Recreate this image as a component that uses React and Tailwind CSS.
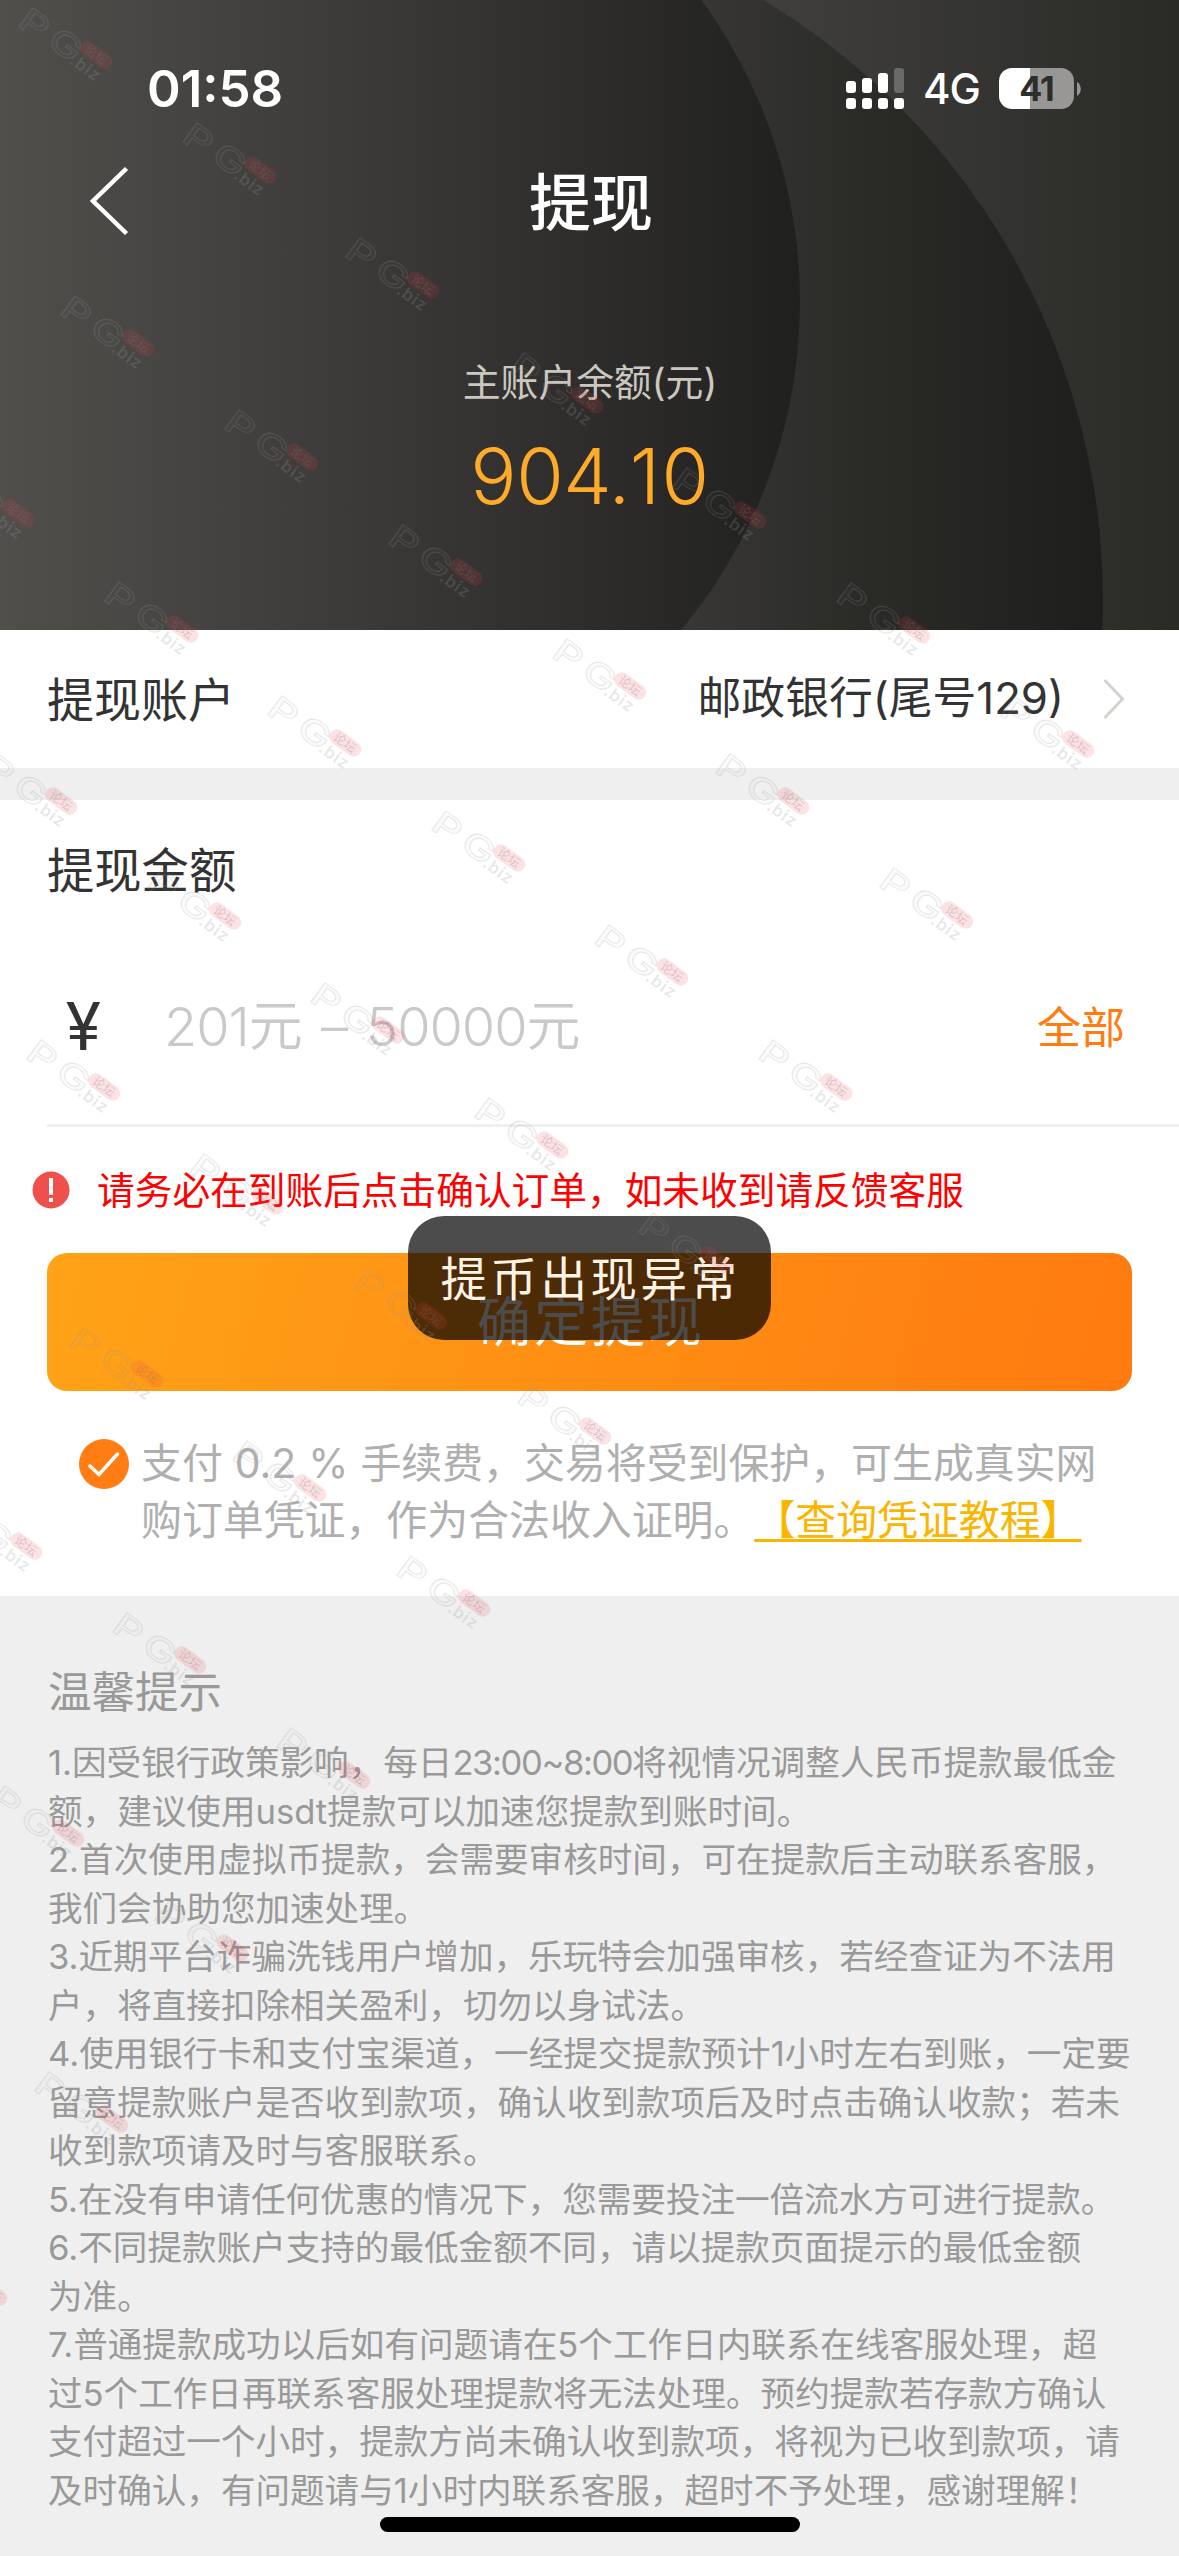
import React from 'react';

const MARKS = [
    [19, 5], [183, 120], [346, 235], [510, 350], [673, 465], [837, 580], [1001, 694],
    [61, 293], [225, 407], [389, 522], [553, 636], [716, 751], [880, 865],
    [-59, 463], [105, 579], [268, 693], [432, 808], [595, 922], [759, 1037],
    [-16, 751], [148, 866], [311, 980], [475, 1095], [639, 1210],
    [27, 1037], [190, 1151], [354, 1266], [518, 1381],
    [70, 1324], [233, 1438], [397, 1553],
    [-51, 1496], [113, 1610], [277, 1725],
    [-9, 1783], [155, 1898],
    [35, 2069], [-86, 2242],
];

const TIPS = [
    '1.因受银行政策影响，每日23:00~8:00将视情况调整人民币提款最低金',
    '额，建议使用usdt提款可以加速您提款到账时间。',
    '2.首次使用虚拟币提款，会需要审核时间，可在提款后主动联系客服，',
    '我们会协助您加速处理。',
    '3.近期平台诈骗洗钱用户增加，乐玩特会加强审核，若经查证为不法用',
    '户，将直接扣除相关盈利，切勿以身试法。',
    '4.使用银行卡和支付宝渠道，一经提交提款预计1小时左右到账，一定要',
    '留意提款账户是否收到款项，确认收到款项后及时点击确认收款；若未',
    '收到款项请及时与客服联系。',
    '5.在没有申请任何优惠的情况下，您需要投注一倍流水方可进行提款。',
    '6.不同提款账户支持的最低金额不同，请以提款页面提示的最低金额',
    '为准。',
    '7.普通提款成功以后如有问题请在5个工作日内联系在线客服处理，超',
    '过5个工作日再联系客服处理提款将无法处理。预约提款若存款方确认',
    '支付超过一个小时，提款方尚未确认收到款项，将视为已收到款项，请',
    '及时确认，有问题请与1小时内联系客服，超时不予处理，感谢理解！',
];

const HeaderBackground = () => (
    <svg className="absolute inset-0" width="1179" height="630" viewBox="0 0 1179 630">
        <defs>
            <linearGradient id="outer" gradientUnits="userSpaceOnUse" x1="763" y1="0" x2="1179" y2="0">
                <stop offset="0" stopColor="#403f3d" />
                <stop offset="1" stopColor="#2a2a27" />
            </linearGradient>
            <linearGradient id="middle" gradientUnits="userSpaceOnUse" x1="683" y1="0" x2="1103" y2="0">
                <stop offset="0" stopColor="#383735" />
                <stop offset="0.45" stopColor="#2a2a27" />
                <stop offset="1" stopColor="#1e1e1c" />
            </linearGradient>
            <linearGradient id="inner" gradientUnits="userSpaceOnUse" x1="0" y1="0" x2="800" y2="0">
                <stop offset="0" stopColor="#504f4c" />
                <stop offset="0.45" stopColor="#3b3a38" />
                <stop offset="0.75" stopColor="#2d2c2a" />
                <stop offset="1" stopColor="#20201e" />
            </linearGradient>
        </defs>
        <rect width="1179" height="630" fill="url(#outer)" />
        <circle cx="403" cy="600" r="700" fill="url(#middle)" />
        <circle cx="288" cy="302" r="512" fill="url(#inner)" />
    </svg>
);

const StatusBar = () => (
    <div className="flex h-[148px] items-start justify-between pl-[147px] pr-[98px] pt-[60px] text-white">
        <span className="text-[51px] font-semibold leading-[57px]">01:58</span>
        <div className="flex items-center pt-[7px]">
            <svg width="58" height="41" viewBox="0 0 58 41" fill="#fff">
                <rect x="0" y="13" width="10" height="12" rx="3" />
                <rect x="16" y="10" width="10" height="15" rx="3" />
                <rect x="32" y="5" width="10" height="20" rx="3" />
                <rect x="48" y="0" width="10" height="25" rx="3" opacity="0.25" />
                <rect x="0" y="30" width="10" height="11" rx="3" />
                <rect x="16" y="30" width="10" height="11" rx="3" />
                <rect x="32" y="30" width="10" height="11" rx="3" />
                <rect x="48" y="30" width="10" height="11" rx="3" />
            </svg>
            <span className="ml-[19px] w-[76px] text-[42px] font-medium leading-[43px] tracking-[-1px]">4G</span>
            <div className="flex h-[41px] w-[75px] items-center justify-center rounded-[13px] bg-linear-to-r from-white from-[41%] to-[#989795] to-[41%]">
                <span className="text-[34px] font-bold leading-[41px] tracking-[-1px] text-[#2d2d2b]">41</span>
            </div>
            <svg className="ml-[3px]" width="4" height="14" viewBox="0 0 4 14">
                <path d="M0 0C5 3 5 11 0 14Z" fill="#989795" />
            </svg>
        </div>
    </div>
);

const Header = () => (
    <header className="relative h-[630px]">
        <HeaderBackground />
        <div className="relative">
            <StatusBar />
            <div className="grid h-[106px] grid-cols-3 items-center">
                <svg className="ml-[88px]" width="42" height="72" viewBox="0 0 42 72" fill="none">
                    <path d="M38.500 3.500L5 36L38.500 68.500" stroke="#fff" strokeWidth="4.500" />
                </svg>
                <h1 className="pl-[3px] pt-[6px] text-center text-[62px] font-medium leading-[100px] text-white">提现</h1>
            </div>
            <div className="pt-[98px] text-center">
                <div className="pl-px text-[37.8px] leading-[60px] text-[#cbc8c0]">主账户余额(元)</div>
                <div className="mt-[14px] text-[77px] font-[350] leading-[100px] tracking-[-0.5px] text-[#ffab2a]">
                    904.<span className="tracking-[1.5px]">1</span>0
                </div>
            </div>
        </div>
    </header>
);

const Toast = () => (
    <div className="absolute left-[408px] top-[1216px] flex h-[124px] w-[363px] justify-center rounded-[36px] bg-black/70">
        <span className="pl-[2px] text-[46.5px] leading-[126px] tracking-[3.5px] text-[#fff3e6]">提币出现异常</span>
    </div>
);

const Watermark = ({ x, y }) => (
    <svg className="absolute overflow-visible" style={{ left: x, top: y }} width="94" height="80" viewBox="0 0 94 80">
        <g transform="rotate(36)" fontFamily="Inter">
            <text
                x="7 33"
                y="18 16"
                transform="scale(1.35 1)"
                fontSize="33"
                fontWeight="500"
                fill="#999"
                fillOpacity="0.05"
                stroke="#999"
                strokeOpacity="0.22"
                strokeWidth="1"
            >
                PG
            </text>
            <rect x="74" y="-12.500" width="36" height="15" rx="7.500" fill="#f03c48" fillOpacity="0.15" />
            <text x="79" y="-0.500" fontSize="12.500" fontFamily="Noto Sans CJK SC" fill="#777" fillOpacity="0.3">论坛</text>
            <text x="74" y="17.500" fontSize="17" fontWeight="600" letterSpacing="0.8" fill="#999" fillOpacity="0.24">.biz</text>
        </g>
    </svg>
);

// Latin runs are set a little tighter than the Chinese around them
const TipLine = ({ text }) => (
    <div>
        {text.split(/([\x21-\x7e]{5,})/).map((part, i) => (
            <span key={i} className={i % 2 ? 'tracking-[-1.4px]' : ''}>{part}</span>
        ))}
    </div>
);

const App = () => {
    return (
        <div className="relative h-[2556px] w-[1179px] overflow-hidden whitespace-nowrap bg-[#efefef] font-[Inter,'Noto_Sans_CJK_SC',sans-serif] text-[#333]">
            <Header />

            {/* Account */}
            <section className="flex h-[138px] items-center justify-between bg-white pl-[47px] pr-[54px]">
                <span className="text-[47px] leading-[63px]">提现账户</span>
                <div className="flex items-center">
                    <span className="text-[43.8px] leading-[62px]">邮政银行(尾号129)</span>
                    <svg className="ml-[39px]" width="22" height="42" viewBox="0 0 22 42" fill="none">
                        <path d="M1.500 2L19.500 21L1.500 40" stroke="#d3d2cd" strokeWidth="3" />
                    </svg>
                </div>
            </section>

            {/* Amount */}
            <section className="mt-[32px] h-[796px] bg-white">
                <div className="pl-[47px] pt-[41px] text-[47.3px] leading-[60px]">提现金额</div>
                <div className="ml-[47px] mt-[75px] flex h-[151px] items-start border-b-[3px] border-[#efefef] pr-[54px] pt-[12px]">
                    <span className="ml-[19px] w-[98px] font-[Roboto] text-[66px] leading-[80px]">¥</span>
                    <span className="text-[54px] font-[350] leading-[78px] tracking-[-1px] text-[#c9c9c9] [word-spacing:5px]">201元 – 50000元</span>
                    <span className="ml-auto text-[44px] leading-[80px] text-[#ff7d10]">全部</span>
                </div>
                <div className="flex h-[126px] items-center pl-[32px]">
                    <svg width="38" height="38" viewBox="0 0 38 38">
                        <circle cx="19" cy="19" r="18.500" fill="#ef504c" />
                        <rect x="17" y="7" width="4" height="17" fill="#fff" />
                        <rect x="17" y="27" width="4" height="4" fill="#fff" />
                    </svg>
                    <span className="ml-[27px] text-[37.7px] leading-[60px] text-[#ff0000]">
                        请务必在到账后点击确认订单，如未收到请反馈客服
                    </span>
                </div>
                <button className="mx-[47px] block h-[138px] w-[1085px] rounded-[20px] bg-linear-[105deg] from-[#ffa317] to-[#ff7a10] pl-[3px] text-[54px] leading-[140px] tracking-[3px] text-white">
                    确定提现
                </button>
                <div className="mt-[43px] flex pl-[78px]">
                    <svg className="mt-[4px]" width="52" height="52" viewBox="0 0 52 52" fill="none">
                        <circle cx="26" cy="26" r="25" fill="#ff7d12" />
                        <path d="M12 28L21 36.500L39.500 16" stroke="#fff" strokeWidth="3.500" strokeLinecap="round" />
                    </svg>
                    <p className="ml-[11px] pt-px text-[40.9px] leading-[56.700px] text-[#afafaf] [text-spacing-trim:space-all] [word-spacing:0.5px]">
                        支付 0.2 % 手续费，交易将受到保护，可生成真实网
                        <br />
                        购订单凭证，作为合法收入证明。
                        <a className="text-[#fab500] underline decoration-[3px] underline-offset-[4px]">【查询凭证教程】</a>
                    </p>
                </div>
            </section>

            {/* Tips */}
            <section className="pl-[48px] pt-[66px] text-[#999]">
                <h2 className="text-[43.5px] leading-[60px]">温馨提示</h2>
                <div className="mt-[16px] text-[34.6px] leading-[48.500px]">
                    {TIPS.map((line) => (
                        <TipLine key={line} text={line} />
                    ))}
                </div>
            </section>

            <Toast />

            <div className="pointer-events-none absolute inset-0 overflow-hidden">
                {MARKS.map(([x, y]) => (
                    <Watermark key={`${x}-${y}`} x={x} y={y} />
                ))}
            </div>

            {/* Home indicator */}
            <div className="absolute left-[380px] top-[2517px] h-[15px] w-[420px] rounded-full bg-black" />
        </div>
    );
};

export default App;
